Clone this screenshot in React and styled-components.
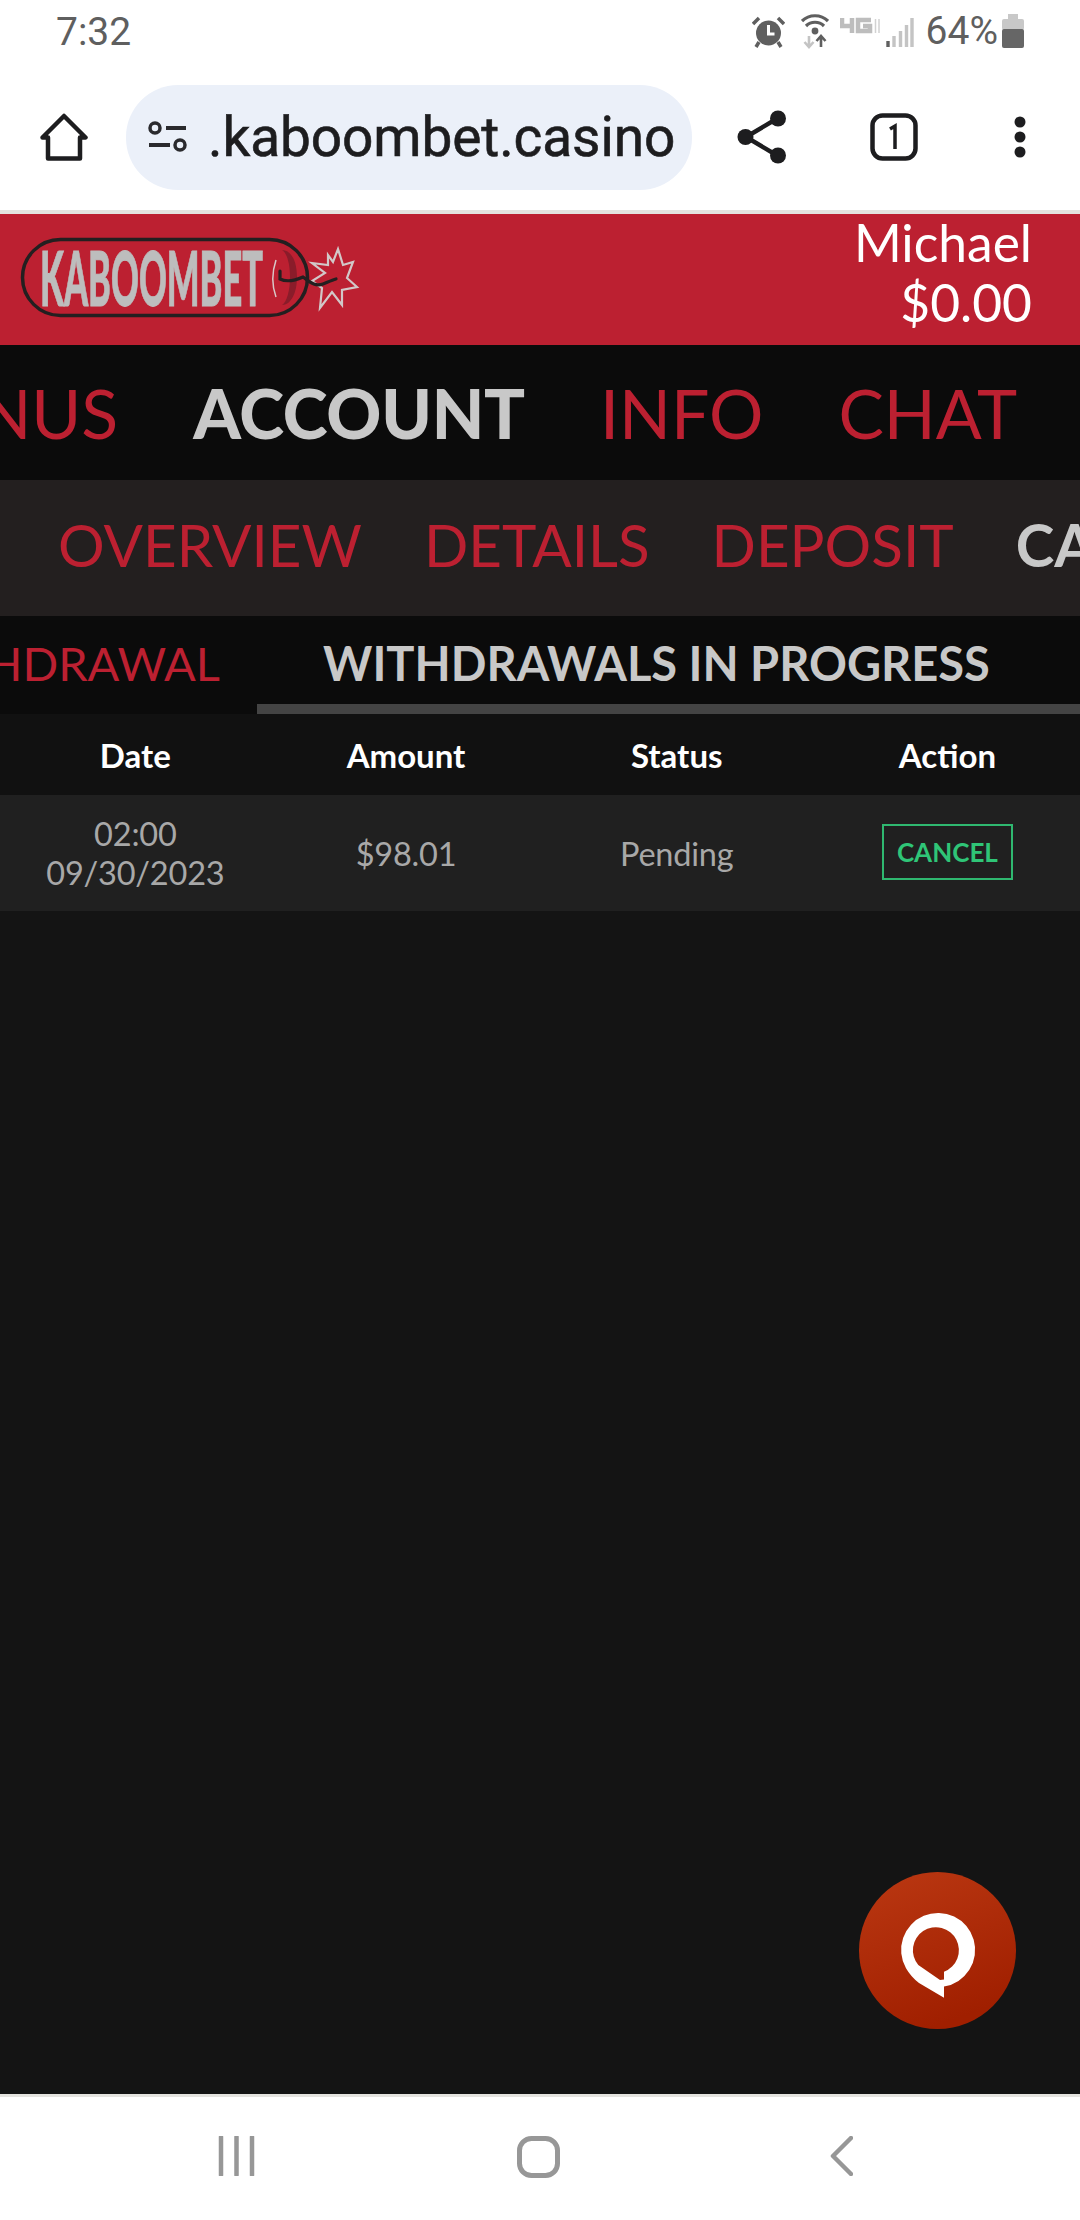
import React from "react";
import styled, { createGlobalStyle } from "styled-components";

const Global = createGlobalStyle`
  html, body { margin: 0; padding: 0; background: #141414; }
  * { box-sizing: border-box; }
`;
const Phone = styled.div`
  position: relative; width: 1080px; height: 2220px; overflow: hidden;
  display: flex; flex-direction: column; background: #141414;
  font-family: Lato, "Liberation Sans", sans-serif;
`;
const StatusBar = styled.div`
  height: 64px; flex: none; background: #fff; display: flex; align-items: center;
  padding: 0 56px; justify-content: space-between;
  font-family: Roboto, sans-serif; color: #5f5f5f; font-size: 39px;
`;
const StatusIcons = styled.div`display: flex; align-items: center; gap: 12px; margin-top: -2px;`;
const Toolbar = styled.div`
  height: 146px; flex: none; background: #fff; display: flex; align-items: center;
  padding: 0 0 0 40px;
`;
const UrlPill = styled.div`
  width: 566px; height: 105px; margin-left: 38px; border-radius: 52px; background: #ebf0f9;
  display: flex; align-items: center; padding-left: 22px; flex: none; overflow: hidden;
`;
const UrlText = styled.span`
  font-family: Roboto, sans-serif; font-size: 55px; color: #1d1d1f; margin-left: 20px; white-space: nowrap;
  letter-spacing: -0.1px; -webkit-text-stroke: 0.6px #1d1d1f;
`;
const ToolSlot = styled.div`flex: none; display: flex; margin-left: ${p => p.$gap}px;`;
const Sep = styled.div`height: 4px; flex: none; background: #e4e3df;`;
const Header = styled.div`
  height: 131px; flex: none; background: #bc2031; display: flex; align-items: center;
  justify-content: space-between; padding: 0 48px 0 20px;
`;
const Account = styled.div`
  text-align: right; color: #fff; font-size: 51.5px; line-height: 60px; margin-top: -15px;
`;
const NavBar = styled.div`
  height: 135px; flex: none; background: #0b0b0b; display: flex; align-items: center; overflow: hidden;
  gap: 75px; padding-left: 0;
`;
const NavItem = styled.span`
  flex: none; font-size: 68px; font-weight: ${p => p.$on ? 900 : 400};
  letter-spacing: ${p => p.$on ? "-0.2px" : "0"};
  margin-left: ${p => p.$shift || 0}px;
  color: ${p => p.$on ? "#c8c8c8" : "#bc2031"};
`;
const SubBar = styled.div`
  height: 136px; flex: none; background: #231f1f; display: flex; align-items: center; overflow: hidden;
  padding: 0 0 9px 58px; gap: 62px;
`;
const SubItem = styled.span`
  flex: none; font-size: 58.3px; font-weight: ${p => p.$on ? 700 : 400};
  color: ${p => p.$on ? "#c8c8c8" : "#bc2031"};
`;
const TabBar = styled.div`
  height: 98px; flex: none; background: #0b0b0b; display: flex; overflow: hidden;
`;
const TabOff = styled.div`
  width: 257px; flex: none; display: flex; justify-content: flex-end; align-items: center;
  padding: 0 37px 5px 0; color: #bc2031; font-size: 47px; white-space: nowrap;
`;
const TabOn = styled.div`
  flex: 1; display: flex; align-items: center; padding: 6px 0 0 66px; color: #c8c8c8;
  font-size: 47px; font-weight: 700; white-space: nowrap; border-bottom: 10px solid #444;
`;
const Row = styled.div`
  display: grid; grid-template-columns: repeat(4, 270.7px); align-items: center; justify-items: center;
  height: ${p => p.$h}px; flex: none; background: ${p => p.$bg};
`;
const HeadCell = styled.div`color: #fff; font-size: 33px; font-weight: 700;`;
const Cell = styled.div`color: #a8a8a8; font-size: 32.500px; line-height: 39px; text-align: center; letter-spacing: -0.2px;`;
const CancelBtn = styled.div`
  width: 131px; height: 56px; border: 2px solid #2fb870; color: #2fc577; font-size: 26px; font-weight: 700;
  display: flex; align-items: center; justify-content: center; margin-bottom: 2px;
`;
const Fill = styled.div`flex: 1; background: #141414;`;
const ChatBtn = styled.div`
  position: absolute; left: 859px; top: 1872px; width: 157px; height: 157px; border-radius: 50%;
  background: linear-gradient(160deg, #bb3812 0%, #a01f00 85%); display: flex;
`;
const BottomSep = styled.div`height: 3px; flex: none; background: #e4e3df;`;
const BottomBar = styled.div`
  height: 123px; flex: none; background: #fff; display: grid; grid-template-columns: 218px 37px 262px 43px 270px 23px;
  align-items: start; padding-top: 39px;
  & > svg { display: block; }
`;
const Spacer = styled.i`display: block;`;

const Alarm = () => (
  <svg width="33" height="33" viewBox="0 0 33 33" style={{ marginRight: 4 }}>
    <circle cx="16.5" cy="18" r="12.5" fill="#5f5f5f" />
    <path d="M16.5 10v9h6" stroke="#fff" strokeWidth="3" fill="none" />
    <path d="M1 9 7 3M32 9 26 3M7 27l-3 5M26 27l3 5" stroke="#5f5f5f" strokeWidth="3.5" />
  </svg>
);
const Wifi = () => (
  <svg width="28" height="36" viewBox="0 0 28 36">
    <path d="M1 8C8 1 20 1 27 8M5 13c5-5 13-5 18 0" stroke="#5f5f5f" strokeWidth="3.2" fill="none" />
    <circle cx="14" cy="18" r="3.4" fill="#5f5f5f" />
    <path d="M8 23v11M3.5 29 8 34l4.500-5" stroke="#c4c4c4" strokeWidth="2.600" fill="none" />
    <path d="M20 34V23M15.500 28 20 23l4.500 5" stroke="#5f5f5f" strokeWidth="2.600" fill="none" />
  </svg>
);
const LteG = () => (
  <svg width="40" height="18" viewBox="0 0 40 18" style={{ marginLeft: -1, marginTop: -10 }}>
    <path d="M2 1v8h10M12 1v15" stroke="#bdbdbd" strokeWidth="4.500" fill="none" />
    <path d="M31 3H18v11h12V9h-7" stroke="#bdbdbd" strokeWidth="4.500" fill="none" />
    <path d="M35.500 2v14M39 2v14" stroke="#d2d2d2" strokeWidth="1.500" />
  </svg>
);
const Signal = () => (
  <svg width="28" height="30" viewBox="0 0 28 30" style={{ marginLeft: -6, marginTop: 2 }}>
    <path d="M2 24v6" stroke="#5f5f5f" strokeWidth="3.400" />
    <path d="M8 19v11M14.500 14v16M20.500 8v22M26 1v29" stroke="#c4c4c4" strokeWidth="3.400" />
  </svg>
);
const Battery = () => (
  <svg width="22" height="34" viewBox="0 0 22 34" style={{ marginLeft: -8 }}>
    <rect x="6" y="0" width="10" height="5" fill="#c8c8c8" />
    <rect x="0" y="5" width="22" height="11" rx="2" fill="#c8c8c8" />
    <rect x="0" y="15" width="22" height="19" rx="2" fill="#666" />
  </svg>
);
const Home = () => (
  <svg width="48" height="48" viewBox="0 0 48 48">
    <path d="M2.500 24.500 24 3l21.500 21.500h-5.500V45.500H8V24.500Z" fill="none" stroke="#1d1d1f" strokeWidth="4.500" strokeLinejoin="round" />
  </svg>
);
const Tune = () => (
  <svg width="40" height="34" viewBox="0 0 40 34">
    <circle cx="7" cy="8" r="5" fill="none" stroke="#2a2a2e" strokeWidth="3.500" />
    <path d="M18 8h20M1 25h21" stroke="#2a2a2e" strokeWidth="4" />
    <circle cx="32" cy="25" r="5" fill="none" stroke="#2a2a2e" strokeWidth="3.500" />
  </svg>
);
const Share = () => (
  <svg width="50" height="54" viewBox="0 0 50 54">
    <path d="M41 8 9 27l32 19" fill="none" stroke="#1d1d1f" strokeWidth="4.500" />
    <circle cx="41" cy="8.500" r="8" fill="#1d1d1f" />
    <circle cx="8.500" cy="27" r="8" fill="#1d1d1f" />
    <circle cx="41" cy="45.500" r="8" fill="#1d1d1f" />
  </svg>
);
const TabCount = () => (
  <svg width="48" height="48" viewBox="0 0 48 48">
    <rect x="2.500" y="2.500" width="43" height="43" rx="10" fill="none" stroke="#1d1d1f" strokeWidth="4.500" />
    <path d="M20 16l5-3v23" fill="none" stroke="#1d1d1f" strokeWidth="3.500" />
  </svg>
);
const Dots = () => (
  <svg width="12" height="42" viewBox="0 0 12 42">
    <circle cx="6" cy="6" r="5.500" fill="#1d1d1f" />
    <circle cx="6" cy="21" r="5.500" fill="#1d1d1f" />
    <circle cx="6" cy="36" r="5.500" fill="#1d1d1f" />
  </svg>
);
const Logo = () => (
  <svg width="342" height="100" viewBox="0 0 342 100">
    <rect x="2.500" y="9.500" width="285" height="76" rx="38" fill="#bc2031" stroke="#231f20" strokeWidth="3.500" />
    <text x="20" y="76" fontFamily="Lato, sans-serif" fontWeight="900" fontSize="77"
      fill="#bdbdbd" stroke="#bdbdbd" strokeWidth="1" textLength="223" lengthAdjust="spacingAndGlyphs">KABOOMBET</text>
    <path d="M262 20c5 3 8 14 8 27s-3 25-8 28c9 0 15-12 15-28s-6-27-15-27Z" fill="#8a1c2a" />
    <path d="M256 30c-4 12-4 26 0 37" stroke="#d8c8c8" strokeWidth="1.500" fill="none" />
    <path d="M318 19 323 35 333 32 327 48 337 57 322 60 322 75 312 62 300 78 302 58 292 51 305 43 292 33 308 35 308 25 313 32Z"
      fill="#bc2031" stroke="#d2c8c8" strokeWidth="2.200" />
    <path d="M260 41v8C266 52 274 51 283 47C290 52 295 57 303 54C308 52 312 50 316 49" fill="none" stroke="#231f20" strokeWidth="3.200" strokeLinecap="round" />
  </svg>
);
const ChatIcon = () => (
  <svg width="157" height="157" viewBox="0 0 157 157">
    <path fill="#fff" fillRule="evenodd"
      d="M85 125.700V114.500A37 37 0 1 0 47 96.300Q52 105 60 111ZM85 99.700A23 23 0 1 0 59.300 93L81 108L85 107.500Z" />
  </svg>
);

export default function App() {
  return (
    <Phone>
      <Global />
      <StatusBar>
        <span>7:32</span>
        <StatusIcons>
          <Alarm /><Wifi /><LteG /><Signal /><span>64%</span><Battery />
        </StatusIcons>
      </StatusBar>
      <Toolbar>
        <Home />
        <UrlPill><Tune /><UrlText>.kaboombet.casino</UrlText></UrlPill>
        <ToolSlot $gap={45}><Share /></ToolSlot>
        <ToolSlot $gap={83}><TabCount /></ToolSlot>
        <ToolSlot $gap={96}><Dots /></ToolSlot>
      </Toolbar>
      <Sep />
      <Header>
        <Logo />
        <Account>Michael<br />$0.00</Account>
      </Header>
      <NavBar>
        <NavItem $shift={-119}>BONUS</NavItem>
        <NavItem $on>ACCOUNT</NavItem>
        <NavItem>INFO</NavItem>
        <NavItem>CHAT</NavItem>
      </NavBar>
      <SubBar>
        <SubItem>OVERVIEW</SubItem>
        <SubItem>DETAILS</SubItem>
        <SubItem>DEPOSIT</SubItem>
        <SubItem $on>CASHIER</SubItem>
      </SubBar>
      <TabBar>
        <TabOff>WITHDRAWAL</TabOff>
        <TabOn>WITHDRAWALS IN PROGRESS</TabOn>
      </TabBar>
      <Row $h={81} $bg="#111">
        <HeadCell>Date</HeadCell>
        <HeadCell>Amount</HeadCell>
        <HeadCell>Status</HeadCell>
        <HeadCell>Action</HeadCell>
      </Row>
      <Row $h={116} $bg="#202020">
        <Cell>02:00<br />09/30/2023</Cell>
        <Cell>$98.01</Cell>
        <Cell>Pending</Cell>
        <CancelBtn>CANCEL</CancelBtn>
      </Row>
      <Fill />
      <ChatBtn><ChatIcon /></ChatBtn>
      <BottomSep />
      <BottomBar>
        <Spacer />
        <svg width="37" height="40" viewBox="0 0 37 40">
          <path d="M3 1v38M18.500 1v38M34 1v38" stroke="#979797" strokeWidth="4.500" strokeLinecap="round" />
        </svg>
        <Spacer />
        <svg width="43" height="42" viewBox="0 0 43 42">
          <rect x="2.500" y="2.500" width="38" height="37" rx="12" fill="none" stroke="#979797" strokeWidth="5" />
        </svg>
        <Spacer />
        <svg width="23" height="40" viewBox="0 0 23 40">
          <path d="M21 2 3 20l18 18" fill="none" stroke="#979797" strokeWidth="4.500" strokeLinecap="round" strokeLinejoin="round" />
        </svg>
      </BottomBar>
    </Phone>
  );
}
